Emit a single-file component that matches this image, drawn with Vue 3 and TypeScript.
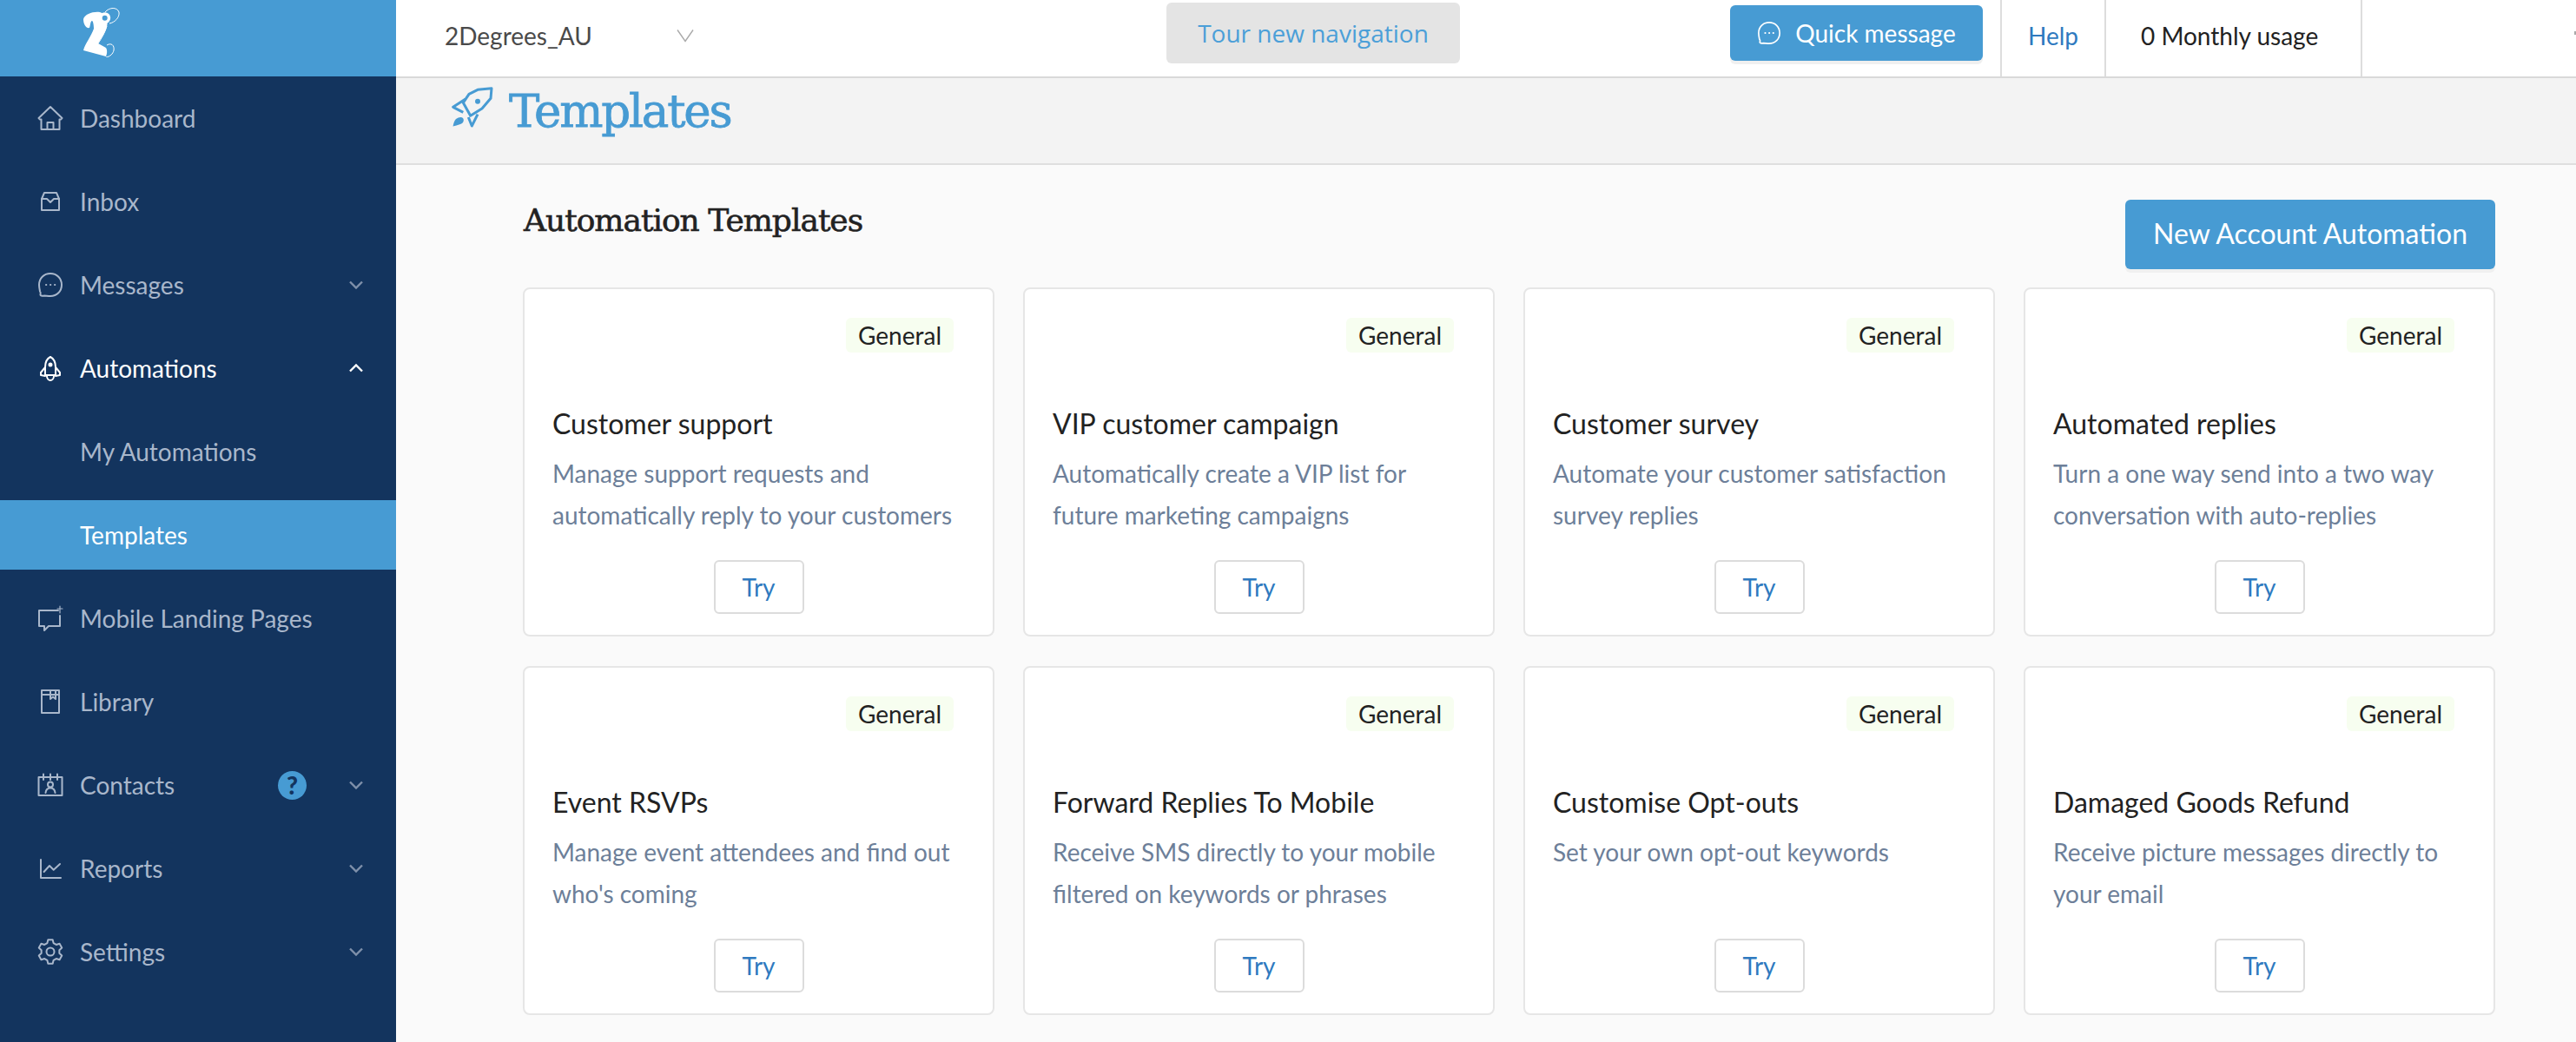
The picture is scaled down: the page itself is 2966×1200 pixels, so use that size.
<script setup lang="ts">
interface Nav { label: string; icon: string; chevron?: 'up' | 'down'; active?: boolean; selected?: boolean; sub?: boolean; help?: boolean }
const nav: Nav[] = [
  { label: 'Dashboard', icon: 'home' },
  { label: 'Inbox', icon: 'inbox' },
  { label: 'Messages', icon: 'chat', chevron: 'down' },
  { label: 'Automations', icon: 'rocket', chevron: 'up', active: true },
  { label: 'My Automations', icon: '', sub: true },
  { label: 'Templates', icon: '', sub: true, selected: true },
  { label: 'Mobile Landing Pages', icon: 'landing' },
  { label: 'Library', icon: 'book' },
  { label: 'Contacts', icon: 'contacts', chevron: 'down', help: true },
  { label: 'Reports', icon: 'chart', chevron: 'down' },
  { label: 'Settings', icon: 'gear', chevron: 'down' },
]
const cards = [
  { t: 'Customer support', d: ['Manage support requests and', 'automatically reply to your customers'] },
  { t: 'VIP customer campaign', d: ['Automatically create a VIP list for', 'future marketing campaigns'] },
  { t: 'Customer survey', d: ['Automate your customer satisfaction', 'survey replies'] },
  { t: 'Automated replies', d: ['Turn a one way send into a two way', 'conversation with auto-replies'] },
  { t: 'Event RSVPs', d: ['Manage event attendees and find out', "who's coming"] },
  { t: 'Forward Replies To Mobile', d: ['Receive SMS directly to your mobile', 'filtered on keywords or phrases'] },
  { t: 'Customise Opt-outs', d: ['Set your own opt-out keywords', ''] },
  { t: 'Damaged Goods Refund', d: ['Receive picture messages directly to', 'your email'] },
]
</script>

<template>
  <div class="app">
    <aside class="side">
      <div class="logo">
        <svg width="46" height="58" viewBox="0 0 46 58">
          <path d="M1 14C3 8 12 5 20 6c7 2 10 10 8 17-2 8-7 13-10 19l9 5c2 3 1 8 0 10L1 50c2-8 9-16 12-25 0-5-1-9-2-9-2 0-2 6-3 8-4 1-7-4-7-10z" fill="#fff"/>
          <circle cx="25.700" cy="12.700" r="6.500" fill="#fff"/>
          <circle cx="25.700" cy="12.700" r="3" fill="#479bd3"/>
          <path d="M26 6c5-6 14-6 16 0 1 6-5 12-11 13M28 22c-2 7-6 14-10 20M28 44c5-3 9 0 8 6-1 4-4 7-9 8" fill="none" stroke="#fff" stroke-width="1"/>
        </svg>
      </div>
      <nav class="nav">
        <a v-for="n in nav" :key="n.label" class="item" :class="{ active: n.active, selected: n.selected }">
          <span class="ico">
            <svg v-if="n.icon" width="30" height="30" viewBox="0 0 30 30" fill="none" stroke="currentColor" stroke-width="2" stroke-linejoin="round" stroke-linecap="round">
              <template v-if="n.icon === 'home'">
                <path d="M1.500 15 15 2l13.500 13-1.500 1.500H25.500V28H4.500V16.500H3z"/><path d="M11.500 28v-8h7v8"/>
              </template>
              <template v-else-if="n.icon === 'inbox'">
                <path d="M5 12 8 5h14l3 7v13H5z"/><path d="M5 12h6l4 4 4-4h6"/>
              </template>
              <template v-else-if="n.icon === 'chat'">
                <path d="M15 2c7.500 0 13 5.500 13 13s-5.500 13-13 13c-3 0-5-.5-7-.5-2 .5-5 0-4.500-1.500.5-1 .5-2-.5-3.500C2.500 20 2 17.500 2 15 2 7.500 7.500 2 15 2z"/><path d="M10 15h.3M15 15h.3M20 15h.3" stroke-width="2"/>
              </template>
              <template v-else-if="n.icon === 'rocket'">
                <path d="M15 2c4 2 6 7 6 12v9H9v-9c0-5 2-10 6-12z"/><path d="M9 14l-5 6v3l5 1M21 14l5 6v3l-5 1M11 24c0 3 2 5 4 5s4-2 4-5"/><circle cx="15" cy="11" r="1.500" fill="currentColor"/>
              </template>
              <template v-else-if="n.icon === 'landing'">
                <path d="M24 6H2v18h6v5l5-5h13V12"/><path d="M26 1v8M23 4h6" stroke-width="1.200"/>
              </template>
              <template v-else-if="n.icon === 'book'">
                <path d="M5 2h20v26H5z"/><path d="M5 7h20M15 2v10l3-2.500 3 2.500V2"/>
              </template>
              <template v-else-if="n.icon === 'contacts'">
                <path d="M1.500 6h27v21h-27z"/><path d="M7 2.500V9M15 2.500V9M23 2.500V9"/><circle cx="15" cy="14.500" r="3"/><path d="M9.500 24c.5-4 3-5.500 5.500-5.500s5 1.500 5.500 5.500"/>
              </template>
              <template v-else-if="n.icon === 'chart'">
                <path d="M4 5v21h23"/><path d="M7.600 19 14 12l4.700 4.700L26 10"/>
              </template>
              <template v-else>
                <circle cx="15" cy="15" r="4.500"/>
                <path d="M12.330 1.260H17.670L18.590 5.130 21.750 6.960 25.570 5.820 28.240 10.440 25.340 13.180V16.820L28.240 19.560 25.570 24.180 21.750 23.040 18.590 24.870 17.670 28.740H12.330L11.410 24.870 8.250 23.040 4.430 24.180 1.760 19.560 4.660 16.820V13.180L1.760 10.440 4.430 5.820 8.250 6.960 11.410 5.130z"/>
              </template>
            </svg>
          </span>
          <span class="label">{{ n.label }}</span>
          <span v-if="n.help" class="help">?</span>
          <svg v-if="n.chevron" class="chev" :class="n.chevron" width="16" height="10" viewBox="0 0 16 10" fill="none" stroke="currentColor" stroke-width="2.400"><path d="M1 1.500 8 8.500l7-7"/></svg>
        </a>
      </nav>
    </aside>

    <div class="main">
      <header class="top">
        <div class="account">
          <span>2Degrees_AU</span>
          <svg width="20" height="16" viewBox="0 0 20 16" fill="none" stroke="#aaa" stroke-width="1.400"><path d="M1 1.500 10 14.500 19 1.500"/></svg>
        </div>
        <button class="tour">Tour new navigation</button>
        <button class="quick">
          <svg width="28" height="28" viewBox="0 0 30 30" fill="none" stroke="#fff" stroke-width="1.800" stroke-linejoin="round" stroke-linecap="round"><path d="M15 2c7.500 0 13 5.500 13 13s-5.500 13-13 13c-3 0-5-.5-7-.5-2 .5-5 0-4.500-1.500.5-1 .5-2-.5-3.500C2.500 20 2 17.500 2 15 2 7.500 7.500 2 15 2z"/><path d="M10 15h.3M15 15h.3M20 15h.3" stroke-width="2"/></svg>
          Quick message
        </button>
        <a class="help-link">Help</a>
        <div class="usage">0 Monthly usage</div>
        <span class="edge"></span>
      </header>

      <section class="band">
        <svg width="50" height="50" viewBox="0 0 50 50" fill="none" stroke="#479bd3" stroke-width="3" stroke-linejoin="round">
          <path d="M46 1.700 30 3.300 20 8.300 13.300 18.300 21.700 33.300 35 25 45 13.300z"/>
          <path d="M16 14 1.700 23.300 13.300 29.300M30 31.700 23.300 45 19.300 35"/>
          <circle cx="30" cy="16.700" r="3" fill="#479bd3" stroke="none"/>
          <path d="M5 37c3-2 6-3 8-1 2 3 0 6-3 7-3 1-6 2-8.500 2.500C2 43 3 39 5 37z" fill="#479bd3" stroke="none"/>
        </svg>
        <h1>Templates</h1>
      </section>

      <section class="content">
        <div class="head">
          <h2>Automation Templates</h2>
          <button class="new">New Account Automation</button>
        </div>
        <div class="grid">
          <article v-for="c in cards" :key="c.t" class="card">
            <div class="tag-row"><span class="tag">General</span></div>
            <h3>{{ c.t }}</h3>
            <p>{{ c.d[0] }}<br />{{ c.d[1] }}</p>
            <button class="try">Try</button>
          </article>
        </div>
      </section>
    </div>
  </div>
</template>

<style>
html, body { margin: 0; height: 1200px; overflow: hidden; background: #fafafa; }
</style>

<style scoped>
.app { display: flex; height: 1200px; font-family: Lato, "Liberation Sans", sans-serif; }
button { font-family: inherit; cursor: pointer; }
.side { width: 456px; flex: none; background: #13345e; display: flex; flex-direction: column; }
.logo { height: 88px; background: #479bd3; display: flex; align-items: flex-start; padding: 8px 0 0 95px; box-sizing: border-box; }
.nav { display: flex; flex-direction: column; gap: 16px; padding-top: 8px; }
.item { height: 80px; display: flex; align-items: center; padding: 0 38px 0 43px; color: #a9b7cb; font-size: 28px; }
.item.active { color: #fff; }
.item.selected { background: #479bd3; color: #fff; }
.ico { width: 30px; height: 30px; margin-right: 19px; display: flex; flex: none; }
.label { flex: 1; }
.help { width: 33px; height: 33px; border-radius: 50%; background: #479bd3; color: #13345e; font-weight: 900; font-size: 28px; display: flex; align-items: center; justify-content: center; margin-right: 49px; }
.chev { color: #7f90aa; }
.chev.up { transform: rotate(180deg); color: #fff; }
.main { flex: 1; min-width: 0; display: flex; flex-direction: column; }
.top { height: 90px; box-sizing: border-box; background: #fff; border-bottom: 2px solid #d9d9d9; display: flex; align-items: center; font-size: 28px; position: relative; }
.account { display: flex; align-items: center; gap: 97px; color: #4a4a4a; margin-left: 56px; width: 290px; padding-bottom: 6px; }
.tour { width: 338px; height: 70px; background: #e4e4e4; color: #4b9fd8; border: 0; border-radius: 6px; font: 400 28px "Open Sans", sans-serif; margin-left: 541px; margin-top: -12px; padding: 0; }
.quick { width: 291px; height: 64px; margin-left: 311px; margin-top: -12px; background: #479bd3; color: #fff; border: 0; border-radius: 6px; font-size: 28px; display: flex; align-items: center; justify-content: center; gap: 16px; box-shadow: 0 4px 0 #f0f0f0; }
.help-link { width: 122px; height: 88px; margin-left: 20px; border-left: 2px solid #ddd; border-right: 2px solid #ddd; box-sizing: border-box; display: flex; align-items: center; justify-content: center; color: #2f7abf; padding-bottom: 6px; }
.usage { width: 295px; height: 88px; border-right: 2px solid #ddd; box-sizing: border-box; display: flex; align-items: center; padding: 0 0 6px 40px; color: #222; }
.edge { position: absolute; right: 0; top: 36px; width: 2px; height: 4px; background: #aaa; }
.band { height: 100px; box-sizing: border-box; background: #f3f3f3; border-bottom: 2px solid #dfdfdf; display: flex; align-items: flex-start; padding: 10px 0 0 64px; gap: 16px; }
.band h1 { margin: 1px 0 0; font: 400 53px/1 "DejaVu Serif", serif; color: #479bd3; letter-spacing: -2.200px; -webkit-text-stroke: 0.8px #479bd3; }
.content { flex: 1; background: #fafafa; padding: 0 0 0 146px; }
.head { width: 2271px; height: 141px; display: flex; justify-content: space-between; align-items: flex-start; }
.head h2 { margin: 42px 0 0 1px; font: 400 36px/1.2 "DejaVu Serif", serif; color: #222; letter-spacing: -1px; -webkit-text-stroke: 0.6px #222; }
.new { margin-top: 40px; width: 426px; height: 80px; padding: 0 0 3px; background: #479bd3; color: #fff; border: 0; border-radius: 6px; font-size: 32px; box-shadow: 0 4px 0 #f0f0f0; }
.grid { width: 2271px; display: grid; grid-template-columns: repeat(4, 1fr); column-gap: 33px; row-gap: 34px; }
.card { height: 402px; box-sizing: border-box; background: #fff; border: 2px solid #e6e6e6; border-radius: 8px; padding: 33px 30px 24px 32px; display: flex; flex-direction: column; }
.tag-row { display: flex; justify-content: flex-end; height: 40px; padding-right: 15px; }
.tag { height: 40px; line-height: 40px; padding: 0 14px; background: #f7fef0; border-radius: 6px; color: #222; font-size: 28px; }
.card h3 { margin: 62px 0 0; font-size: 32px; font-weight: 400; line-height: 40px; color: #222; }
.card p { margin: 13px 0 0; font-size: 28px; line-height: 48px; color: #6d7f99; white-space: nowrap; }
.try { align-self: center; margin: auto 2px 0 0; width: 104px; height: 62px; background: #fff; border: 2px solid #dcdcdc; border-radius: 6px; color: #2f7abf; font-size: 28px; }
</style>
